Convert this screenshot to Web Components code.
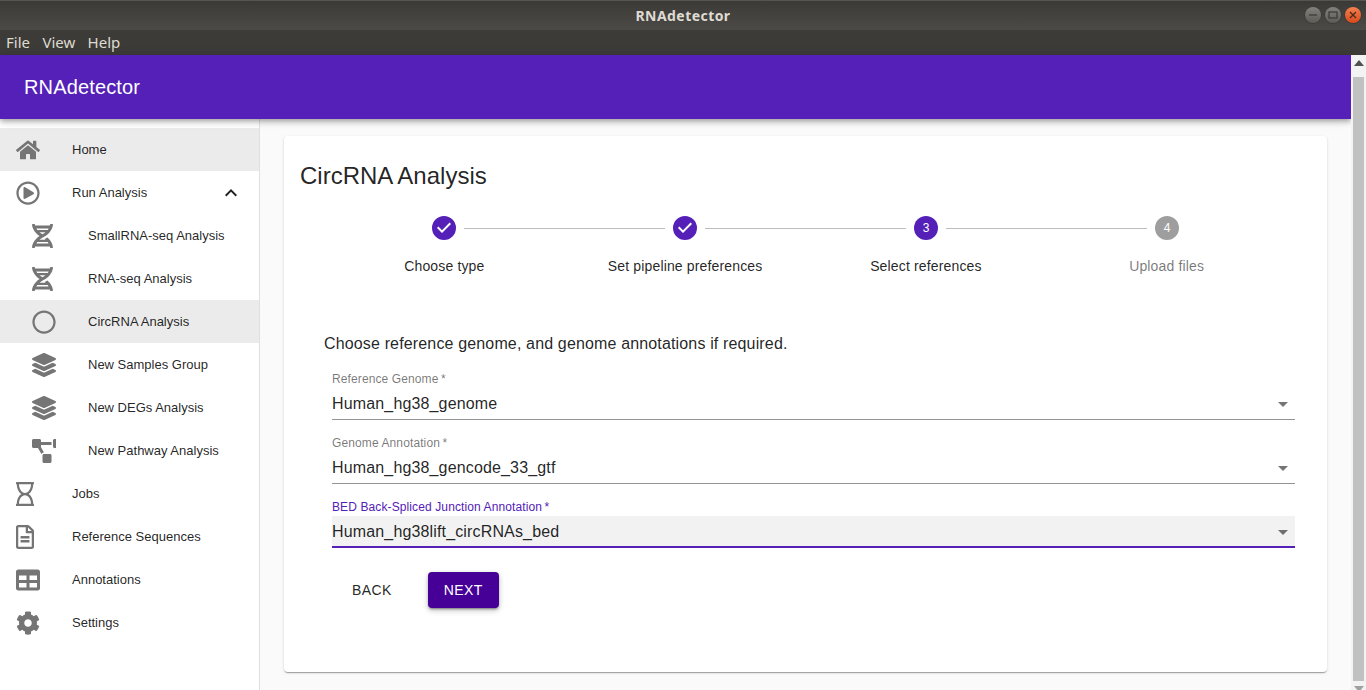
<!DOCTYPE html>
<html>
<head>
<meta charset="utf-8">
<title>RNAdetector</title>
<style>
html, body { margin: 0; height: 690px; overflow: hidden; font-family: "Liberation Sans", Arial, sans-serif; }
</style>
</head>
<body>
<app-window>
  <title-bar slot="title">RNAdetector</title-bar>
  <menu-bar slot="menu"></menu-bar>
  <app-bar slot="appbar">RNAdetector</app-bar>
  <side-nav slot="side">
    <nav-item icon="home" active>Home</nav-item>
    <nav-item icon="play" expand>Run Analysis</nav-item>
    <nav-item icon="dna" sub>SmallRNA-seq Analysis</nav-item>
    <nav-item icon="dna" sub>RNA-seq Analysis</nav-item>
    <nav-item icon="circle" sub active>CircRNA Analysis</nav-item>
    <nav-item icon="layers" sub>New Samples Group</nav-item>
    <nav-item icon="layers" sub>New DEGs Analysis</nav-item>
    <nav-item icon="diagram" sub>New Pathway Analysis</nav-item>
    <nav-item icon="hourglass">Jobs</nav-item>
    <nav-item icon="file">Reference Sequences</nav-item>
    <nav-item icon="table">Annotations</nav-item>
    <nav-item icon="cog">Settings</nav-item>
  </side-nav>
  <wizard-card slot="main" heading="CircRNA Analysis">
    <step-list slot="steps">
      <step-item state="done" first>Choose type</step-item>
      <step-item state="done">Set pipeline preferences</step-item>
      <step-item state="active" num="3">Select references</step-item>
      <step-item state="todo" num="4">Upload files</step-item>
    </step-list>
    <span slot="intro">Choose reference genome, and genome annotations if required.</span>
    <select-field label="Reference Genome" value="Human_hg38_genome"></select-field>
    <select-field label="Genome Annotation" value="Human_hg38_gencode_33_gtf"></select-field>
    <select-field label="BED Back-Spliced Junction Annotation" value="Human_hg38lift_circRNAs_bed" focused></select-field>
    <span slot="back">BACK</span>
    <span slot="next">NEXT</span>
  </wizard-card>
  <fake-scrollbar slot="scroll"></fake-scrollbar>
</app-window>

<script>
const ICONS = {
  home: ['0 0 576 512', 'M280.37 148.26L96 300.11V464a16 16 0 0 0 16 16l112.06-.29a16 16 0 0 0 15.92-16V368a16 16 0 0 1 16-16h64a16 16 0 0 1 16 16v95.64a16 16 0 0 0 16 16.05L464 480a16 16 0 0 0 16-16V300L295.67 148.26a12.19 12.19 0 0 0-15.3 0zM571.6 251.47L488 182.56V44.05a12 12 0 0 0-12-12h-56a12 12 0 0 0-12 12v72.61L318.47 43a48 48 0 0 0-61 0L4.34 251.47a12 12 0 0 0-1.6 16.9l25.5 31A12 12 0 0 0 45.15 301l235.22-193.74a12.19 12.19 0 0 1 15.3 0L530.9 301a12 12 0 0 0 16.9-1.6l25.5-31a12 12 0 0 0-1.7-16.93z'],
  play: ['0 0 512 512', 'M371.7 238l-176-107c-15.8-8.8-35.7 2.5-35.7 21v208c0 18.4 19.8 29.8 35.7 21l176-101c16.4-9.1 16.4-32.8 0-42zM504 256C504 119 393 8 256 8S8 119 8 256s111 248 248 248 248-111 248-248zm-448 0c0-110.5 89.5-200 200-200s200 89.5 200 200-89.5 200-200 200S56 366.5 56 256z'],
  dna: ['0 0 448 512', 'M.1 494.1c-1.1 9.5 6.3 17.8 15.9 17.8l32.3.1c8.1 0 14.9-5.9 16-13.9.7-4.9 1.8-11.1 3.4-18.1H380c1.6 6.9 2.7 13.1 3.4 18.1 1.1 8 7.9 14 16 13.9l32.3-.1c9.6 0 17-8.3 15.9-17.8-4.6-37.9-25.6-129-118.9-207.7-17.6 12.4-37.1 24.2-58.5 35.4 6.2 4.6 11.4 9.4 17 14.2H159.7c21.3-18.1 47-35.6 78.7-51.4C410.5 199.1 442.1 65.8 447.9 17.9 449 8.4 441.6.1 432 .1L399.6 0c-8.1 0-14.9 5.9-16 13.9-.7 4.9-1.8 11.1-3.4 18.1H67.8c-1.6-7-2.7-13.1-3.4-18.1-1.1-8-7.9-14-16-13.9L16.1.1C6.5.1-.9 8.4.2 17.9 5.3 60.8 31.4 171.8 160 256 31.5 340.2 5.3 451.2.1 494.1zM224 219.6c-25.1-13.7-46.4-28.4-64.3-43.6h128.5c-17.8 15.2-39.1 30-64.2 43.6zM355.1 96c-5.8 10.4-12.8 21.1-21 32H114c-8.3-10.9-15.3-21.6-21-32h262.1zM92.9 416c5.8-10.4 12.8-21.1 21-32h219.4c8.3 10.9 15.4 21.6 21.2 32H92.9z'],
  circle: ['0 0 512 512', 'M256 8C119 8 8 119 8 256s111 248 248 248 248-111 248-248S393 8 256 8zm0 448c-110.5 0-200-89.5-200-200S145.5 56 256 56s200 89.5 200 200-89.5 200-200 200z'],
  layers: ['0 0 512 512', 'M12.41 148.02l232.94 105.67c6.8 3.09 14.49 3.09 21.29 0l232.94-105.67c16.55-7.51 16.55-32.52 0-40.03L266.65 2.31a25.607 25.607 0 0 0-21.29 0L12.41 107.98c-16.55 7.51-16.55 32.53 0 40.04zm487.18 88.28l-58.09-26.33-161.64 73.27c-7.56 3.43-15.59 5.17-23.86 5.17s-16.29-1.74-23.86-5.17L70.51 209.97l-58.1 26.33c-16.55 7.5-16.55 32.5 0 40l232.94 105.59c6.8 3.08 14.49 3.08 21.29 0L499.59 276.3c16.55-7.5 16.55-32.5 0-40zm0 127.8l-57.87-26.23-161.86 73.37c-7.56 3.43-15.59 5.17-23.86 5.17s-16.29-1.74-23.86-5.17L70.29 337.87 12.41 364.1c-16.55 7.5-16.55 32.5 0 40l232.94 105.59c6.8 3.08 14.49 3.08 21.29 0L499.59 404.1c16.55-7.5 16.55-32.5 0-40z'],
  // this one is taller than its box in the app: the right-hand square gets cut off
  diagram: ['0 0 512 512', 'M384 320H256c-17.67 0-32 14.33-32 32v128c0 17.67 14.33 32 32 32h128c17.67 0 32-14.33 32-32V352c0-17.67-14.33-32-32-32zM192 32c0-17.67-14.33-32-32-32H32C14.33 0 0 14.33 0 32v128c0 17.67 14.33 32 32 32h95.72l73.16 128.04C211.98 300.98 232.4 288 256 288h.28L192 175.51V128h224V64H192V32zM608 0H480c-17.67 0-32 14.33-32 32v128c0 17.67 14.33 32 32 32h128c17.67 0 32-14.33 32-32V32c0-17.67-14.33-32-32-32z'],
  hourglass: ['0 0 384 512', 'M368 48h4c6.627 0 12-5.373 12-12V12c0-6.627-5.373-12-12-12H12C5.373 0 0 5.373 0 12v24c0 6.627 5.373 12 12 12h4c0 80.564 32.188 165.807 97.18 208C47.899 298.381 16 383.9 16 464h-4c-6.627 0-12 5.373-12 12v24c0 6.627 5.373 12 12 12h360c6.627 0 12-5.373 12-12v-24c0-6.627-5.373-12-12-12h-4c0-80.564-32.188-165.807-97.18-208C336.102 213.619 368 128.1 368 48zM64 48h256c0 101.62-57.307 184-128 184S64 149.621 64 48zm256 416H64c0-101.62 57.308-184 128-184s128 82.38 128 184z'],
  file: ['0 0 384 512', 'M288 248v28c0 6.6-5.4 12-12 12H108c-6.6 0-12-5.4-12-12v-28c0-6.6 5.4-12 12-12h168c6.6 0 12 5.4 12 12zm-12 72H108c-6.6 0-12 5.4-12 12v28c0 6.6 5.4 12 12 12h168c6.6 0 12-5.4 12-12v-28c0-6.6-5.4-12-12-12zm108-188.1V464c0 26.5-21.5 48-48 48H48c-26.5 0-48-21.5-48-48V48C0 21.5 21.5 0 48 0h204.1C264.8 0 277 5.1 286 14.1L369.9 98c9 8.9 14.1 21.2 14.1 33.9zm-128-80V128h76.1L256 51.9zM336 464V176H232c-13.3 0-24-10.7-24-24V48H48v416h288z'],
  table: ['0 0 512 512', 'M464 32H48C21.49 32 0 53.49 0 80v352c0 26.51 21.49 48 48 48h416c26.51 0 48-21.49 48-48V80c0-26.51-21.49-48-48-48zM224 416H64v-96h160v96zm0-160H64v-96h160v96zm224 160H288v-96h160v96zm0-160H288v-96h160v96z'],
  cog: ['0 0 512 512', 'M487.4 315.7l-42.6-24.6c4.3-23.2 4.3-47 0-70.2l42.6-24.6c4.9-2.8 7.1-8.6 5.5-14-11.1-35.6-30-67.8-54.7-94.6-3.8-4.1-10-5.1-14.8-2.3L380.8 110c-17.9-15.4-38.5-27.3-60.8-35.1V25.8c0-5.6-3.9-10.5-9.4-11.7-36.7-8.2-74.3-7.8-109.2 0-5.5 1.2-9.4 6.1-9.4 11.7V75c-22.2 7.9-42.8 19.8-60.8 35.1L88.7 85.5c-4.9-2.8-11-1.9-14.8 2.3-24.7 26.7-43.6 58.9-54.7 94.6-1.7 5.4.6 11.2 5.5 14L67.3 221c-4.3 23.2-4.3 47 0 70.2l-42.6 24.6c-4.9 2.8-7.1 8.6-5.5 14 11.1 35.6 30 67.8 54.7 94.6 3.8 4.1 10 5.1 14.8 2.3l42.6-24.6c17.9 15.4 38.5 27.3 60.8 35.1v49.2c0 5.6 3.9 10.5 9.4 11.7 36.7 8.2 74.3 7.8 109.2 0 5.5-1.2 9.4-6.1 9.4-11.7v-49.2c22.2-7.9 42.8-19.8 60.8-35.1l42.6 24.6c4.9 2.8 11 1.9 14.8-2.3 24.7-26.7 43.6-58.9 54.7-94.6 1.5-5.5-.7-11.3-5.6-14.1zM256 336c-44.1 0-80-35.9-80-80s35.9-80 80-80 80 35.9 80 80-35.9 80-80 80z']
};

function makeElement(name, html) {
  const template = document.createElement('template');
  template.innerHTML = html;
  customElements.define(name, class extends HTMLElement {
    constructor() {
      super();
      this.attachShadow({ mode: 'open' });
      this.shadowRoot.appendChild(template.content.cloneNode(true));
    }
  });
}

makeElement('app-window', `
<style>
:host { display: grid; grid-template-columns: 260px 1fr 15px; grid-template-rows: 30px 25px 64px 1fr; width: 1366px; height: 690px; background: #fafafa; }
.top { grid-column: 1 / -1; }
.bar { grid-column: 1 / 3; position: relative; z-index: 2; }
.scroll { grid-row: 3 / 5; grid-column: 3; position: relative; z-index: 3; }
.side { grid-column: 1; grid-row: 4; min-height: 0; }
.main { grid-column: 2; grid-row: 4; min-width: 0; min-height: 0; }
</style>
<div class="top"><slot name="title"></slot></div>
<div class="top"><slot name="menu"></slot></div>
<div class="bar"><slot name="appbar"></slot></div>
<div class="scroll"><slot name="scroll"></slot></div>
<div class="side"><slot name="side"></slot></div>
<div class="main"><slot name="main"></slot></div>
`);

makeElement('title-bar', `
<style>
:host { display: flex; height: 30px; align-items: center; justify-content: center; position: relative; box-sizing: border-box;
  background: linear-gradient(#3b3a36, #4b4a46); border-top: 1px solid #55544f; color: #dfdbd2; font: bold 14px/1 "Noto Sans", sans-serif; letter-spacing: .45px; }
.btns { position: absolute; right: 5px; top: 6px; display: flex; gap: 4px; }
.b { width: 16px; height: 16px; border-radius: 50%; background: linear-gradient(#82817c, #5c5b56); box-shadow: 0 0 0 1px #3d3c38; display: flex; align-items: center; justify-content: center; }
.c { background: linear-gradient(#f5814f, #d9491a); }
svg { display: block; }
</style>
<slot></slot>
<div class="btns">
  <div class="b"><svg width="10" height="10" viewBox="0 0 10 10"><path d="M1 5h8" stroke="#3a3935" stroke-width="1.2"/></svg></div>
  <div class="b"><svg width="10" height="10" viewBox="0 0 10 10"><rect x="1" y="2" width="8" height="6" fill="none" stroke="#3a3935" stroke-width="1.2"/></svg></div>
  <div class="b c"><svg width="10" height="10" viewBox="0 0 10 10"><path d="M2 2l6 6M8 2l-6 6" stroke="#4a2a1a" stroke-width="1.3"/></svg></div>
</div>
`);

makeElement('menu-bar', `
<style>
:host { display: flex; height: 25px; align-items: center; gap: 12.4px; padding-left: 6px; background: #3c3b37; color: #dfdbd2; font: 15px/1 "Noto Sans", sans-serif; }
</style>
<span>File</span><span>View</span><span>Help</span>
`);

makeElement('app-bar', `
<style>
:host { display: flex; height: 64px; align-items: center; padding-left: 24px; background: #5420b8; color: #fff; font: 20px/1.6 "Liberation Sans", Arial, sans-serif; letter-spacing: .15px;
  box-shadow: 0 2px 4px -1px rgba(0,0,0,.2), 0 4px 5px 0 rgba(0,0,0,.14), 0 1px 10px 0 rgba(0,0,0,.12); }
</style>
<slot></slot>
`);

makeElement('side-nav', `
<style>
:host { display: block; box-sizing: border-box; height: 100%; padding-top: 9px; background: #fff; border-right: 1px solid rgba(0,0,0,.12); }
</style>
<slot></slot>
`);

customElements.define('nav-item', class extends HTMLElement {
  constructor() {
    super();
    this.attachShadow({ mode: 'open' });
  }
  connectedCallback() {
    const [box, d] = ICONS[this.getAttribute('icon')];
    const arrow = this.hasAttribute('expand')
      ? '<svg class="more" viewBox="0 0 24 24"><path d="M12 8l-6 6 1.41 1.41L12 10.83l4.59 4.58L18 14z"/></svg>' : '';
    this.shadowRoot.innerHTML = `
    <style>
    :host { display: flex; align-items: center; height: 43px; padding-left: 16px; padding-right: 16px; color: rgba(0,0,0,.87); font-size: 13px; }
    :host([sub]) { padding-left: 32px; }
    :host([active]) { background: rgba(0,0,0,.08); }
    .icon { width: 24px; height: 24px; fill: #757575; margin-right: 32px; flex: none; }
    .more { width: 24px; height: 24px; margin-left: auto; fill: rgba(0,0,0,.87); }
    </style>
    <svg class="icon" viewBox="${box}" preserveAspectRatio="xMinYMid meet"><path d="${d}"/></svg>
    <slot></slot>${arrow}`;
  }
});

customElements.define('wizard-card', class extends HTMLElement {
  constructor() {
    super();
    this.attachShadow({ mode: 'open' });
  }
  connectedCallback() {
    this.shadowRoot.innerHTML = `
    <style>
    :host { display: block; box-sizing: border-box; width: 1043px; height: 536px; margin: 17px 24px 0; padding: 24px 16px 0; background: #fff; border-radius: 4px; color: rgba(0,0,0,.87);
      box-shadow: 0 2px 1px -1px rgba(0,0,0,.2), 0 1px 1px 0 rgba(0,0,0,.14), 0 1px 3px 0 rgba(0,0,0,.12); }
    h1 { margin: 0; font-size: 24px; font-weight: 400; line-height: 32px; }
    .intro { margin: 32px 24px 16px; font-size: 16px; line-height: 24px; letter-spacing: .15px; }
    .fields { display: grid; gap: 16px; margin: 0 16px 0 32px; }
    .actions { display: flex; margin: 24px 32px 0; padding-left: 4px; gap: 20px; font-size: 14px; letter-spacing: .4px; }
    .btn { display: flex; align-items: center; height: 36px; padding: 0 16px; border-radius: 4px; }
    .next { background: #460098; color: #fff; box-shadow: 0 3px 1px -2px rgba(0,0,0,.2), 0 2px 2px 0 rgba(0,0,0,.14), 0 1px 5px 0 rgba(0,0,0,.12), 0 3px 6px rgba(0,0,0,.15); }
    </style>
    <h1>${this.getAttribute('heading')}</h1>
    <slot name="steps"></slot>
    <div class="intro"><slot name="intro"></slot></div>
    <div class="fields"><slot></slot></div>
    <div class="actions">
      <div class="btn"><slot name="back"></slot></div>
      <div class="btn next"><slot name="next"></slot></div>
    </div>`;
  }
});

makeElement('step-list', `
<style>
:host { display: grid; grid-template-columns: repeat(4, 1fr); padding: 24px; }
</style>
<slot></slot>
`);

customElements.define('step-item', class extends HTMLElement {
  constructor() {
    super();
    this.attachShadow({ mode: 'open' });
  }
  connectedCallback() {
    const state = this.getAttribute('state');
    const num = this.getAttribute('num');
    const mark = state === 'done'
      ? '<svg viewBox="0 0 24 24"><path d="M12 0a12 12 0 1 0 0 24 12 12 0 0 0 0-24zm-2 17l-5-5 1.4-1.4 3.6 3.6 7.6-7.6L19 8l-9 9z"/></svg>'
      : `<svg viewBox="0 0 24 24"><circle cx="12" cy="12" r="12"/><text x="12" y="16" text-anchor="middle">${num}</text></svg>`;
    this.shadowRoot.innerHTML = `
    <style>
    :host { display: flex; flex-direction: column; align-items: center; position: relative; font-size: 14px; line-height: 20px; letter-spacing: .15px; color: rgba(0,0,0,.87); }
    :host([state="todo"]) { color: rgba(0,0,0,.54); }
    svg { width: 24px; height: 24px; display: block; fill: #5420b8; }
    :host([state="todo"]) svg { fill: #9e9e9e; }
    text { fill: #fff; font-size: 12px; letter-spacing: 0; font-family: "Liberation Sans", Arial, sans-serif; }
    .label { margin-top: 16px; text-align: center; }
    .line { position: absolute; top: 12px; left: calc(-50% + 20px); right: calc(50% + 20px); border-top: 1px solid #bdbdbd; }
    :host([first]) .line { display: none; }
    </style>
    <div class="line"></div>
    ${mark}
    <div class="label"><slot></slot></div>`;
  }
});

customElements.define('select-field', class extends HTMLElement {
  constructor() {
    super();
    this.attachShadow({ mode: 'open' });
  }
  connectedCallback() {
    this.shadowRoot.innerHTML = `
    <style>
    :host { display: block; height: 48px; }
    .label { height: 14px; margin-bottom: 2px; font-size: 12px; line-height: 14px; letter-spacing: .11px; color: rgba(0,0,0,.54); }
    .box { display: flex; align-items: center; justify-content: space-between; box-sizing: border-box; height: 32px; padding-top: 1px; font-size: 16px; letter-spacing: .15px; border-bottom: 1px solid rgba(0,0,0,.42); }
    :host([focused]) .label { color: #5420b8; }
    :host([focused]) .box { background: rgba(0,0,0,.05); border-bottom: 2px solid #5420b8; padding-top: 2px; }
    svg { width: 24px; height: 24px; fill: rgba(0,0,0,.54); flex: none; }
    </style>
    <div class="label">${this.getAttribute('label')}&thinsp;*</div>
    <div class="box"><span>${this.getAttribute('value')}</span><svg viewBox="0 0 24 24"><path d="M7 10l5 5 5-5z"/></svg></div>`;
  }
});

makeElement('fake-scrollbar', `
<style>
:host { display: flex; flex-direction: column; align-items: center; box-sizing: border-box; height: 635px; background: #f3f3f3; }
.track { flex: 1; width: 100%; display: flex; flex-direction: column; align-items: center; }
.thumb { width: 11px; height: 604px; background: #c1c1c1; }
svg { width: 14px; height: 8px; fill: #505050; flex: none; margin: 4px 0 10px; }
.down { fill: #a0a0a0; margin: 4px 0 0; }
</style>
<svg viewBox="0 0 14 8"><path d="M7 1l5 6H2z"/></svg>
<div class="track"><div class="thumb"></div></div>
<svg class="down" viewBox="0 0 14 8"><path d="M7 7L2 1h10z"/></svg>
`);
</script>
</body>
</html>
